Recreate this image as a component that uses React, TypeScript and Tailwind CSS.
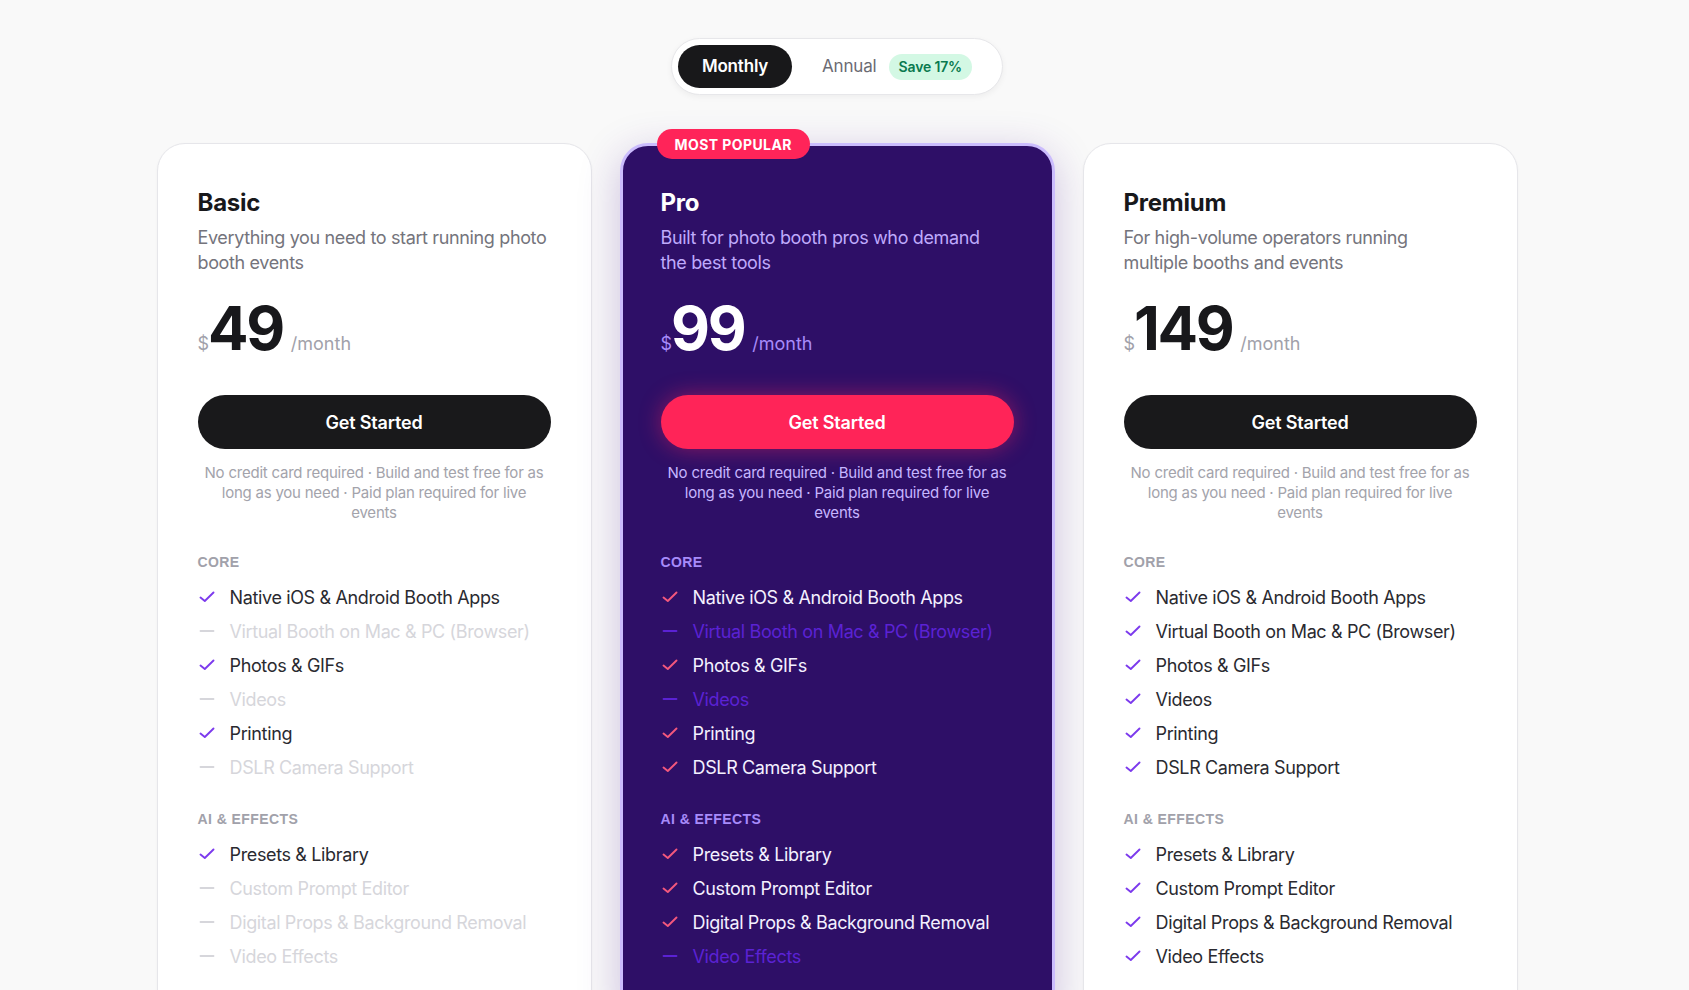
import React from "react";

type Feature = { label: string; on: boolean };
type Plan = {
  name: string;
  desc: string[];
  price: string;
  core: Feature[];
  ai: Feature[];
  featured?: boolean;
};

const coreNames = [
  "Native iOS & Android Booth Apps",
  "Virtual Booth on Mac & PC (Browser)",
  "Photos & GIFs",
  "Videos",
  "Printing",
  "DSLR Camera Support",
];
const aiNames = [
  "Presets & Library",
  "Custom Prompt Editor",
  "Digital Props & Background Removal",
  "Video Effects",
];

const mk = (names: string[], flags: boolean[]) =>
  names.map((label, i) => ({ label, on: flags[i] }));

const plans: Plan[] = [
  {
    name: "Basic",
    desc: ["Everything you need to start running photo", "booth events"],
    price: "49",
    core: mk(coreNames, [true, false, true, false, true, false]),
    ai: mk(aiNames, [true, false, false, false]),
  },
  {
    name: "Pro",
    desc: ["Built for photo booth pros who demand", "the best tools"],
    price: "99",
    core: mk(coreNames, [true, false, true, false, true, true]),
    ai: mk(aiNames, [true, true, true, false]),
    featured: true,
  },
  {
    name: "Premium",
    desc: ["For high-volume operators running", "multiple booths and events"],
    price: "149",
    core: mk(coreNames, [true, true, true, true, true, true]),
    ai: mk(aiNames, [true, true, true, true]),
  },
];

function CheckIcon({ className }: { className: string }) {
  return (
    <svg viewBox="0 0 18 18" className={className} fill="none">
      <path d="M2.5 9.5 L6.8 13 L15.5 4.5" stroke="currentColor" strokeWidth="1.9" strokeLinecap="round" strokeLinejoin="round" />
    </svg>
  );
}

function DashIcon({ className }: { className: string }) {
  return (
    <svg viewBox="0 0 18 18" className={className} fill="none">
      <path d="M2.5 9 L15.5 9" stroke="currentColor" strokeWidth="1.8" strokeLinecap="round" />
    </svg>
  );
}

function FeatureRow({ f, featured }: { f: Feature; featured?: boolean }) {
  const textOn = featured ? "text-[#f4f1ff]" : "text-[#2a2a30]";
  const textOff = featured ? "text-[#5b22d4]" : "text-[#d6d6db]";
  const checkColor = featured ? "text-[#f4587d]" : "text-[#7c3aed]";
  return (
    <li className="flex h-[34px] items-center gap-3.5">
      {f.on ? (
        <CheckIcon className={`h-[18px] w-[18px] shrink-0 ${checkColor}`} />
      ) : (
        <DashIcon className={`h-[18px] w-[18px] shrink-0 ${textOff}`} />
      )}
      <span className={`text-[18px] tracking-[-0.02em] ${f.on ? textOn : textOff}`}>{f.label}</span>
    </li>
  );
}

function Section({ title, items, featured }: { title: string; items: Feature[]; featured?: boolean }) {
  return (
    <div>
      <div
        className={`text-[14px] font-bold uppercase tracking-[0.03em] leading-5 font-['Liberation_Sans',Arial,sans-serif] ${
          featured ? "text-[#a78bfa]" : "text-[#a1a1aa]"
        }`}
      >
        {title}
      </div>
      <ul className="mt-2">
        {items.map((f) => (
          <FeatureRow key={f.label} f={f} featured={featured} />
        ))}
      </ul>
    </div>
  );
}

function PlanCard({ plan }: { plan: Plan }) {
  const ft = plan.featured;
  return (
    <div
      className={`relative rounded-[28px] pb-12 ${
        ft
          ? "border-[3px] border-[#cbbcfd] bg-[#2e0f67] px-[38px] pt-[41px] shadow-[0_10px_40px_rgba(76,29,149,0.25)]"
          : "border border-[#e6e6ea] bg-white px-10 pt-[43px] shadow-[0_1px_3px_rgba(0,0,0,0.04)]"
      }`}
    >
      {ft && (
        <div className="absolute left-[34px] top-[-2px] flex h-[30px] -translate-y-1/2 items-center rounded-full bg-[#ff2459] px-[18px] text-[14px] font-bold uppercase tracking-[0.03em] text-white">
          Most Popular
        </div>
      )}
      <h3 className={`text-2xl font-bold leading-8 tracking-[-0.01em] ${ft ? "text-white" : "text-[#18181b]"}`}>
        {plan.name}
      </h3>
      <p className={`mt-[6px] text-[18px] leading-[25px] tracking-[-0.02em] ${ft ? "text-[#bfaafc]" : "text-[#74747c]"}`}>
        {plan.desc.map((l, i) => (
          <span key={i} className="block whitespace-nowrap">
            {l}
          </span>
        ))}
      </p>
      <div className="mt-[23px] flex items-baseline">
        <span className={`text-[18px] ${ft ? "text-[#a78bfa]" : "text-[#a1a1aa]"}`}>$</span>
        <span className={`ml-[-1px] text-6xl font-bold leading-none tracking-[-0.04em] ${ft ? "text-white" : "text-[#18181b]"}`}>
          {plan.price}
        </span>
        <span className={`ml-2 text-[18px] ${ft ? "text-[#a78bfa]" : "text-[#a1a1aa]"}`}>/month</span>
      </div>
      <button
        className={`mt-[37px] flex h-[54px] w-full items-center justify-center rounded-full text-[18px] font-semibold tracking-[-0.01em] text-white ${
          ft ? "bg-[#ff2458] shadow-[0_0_22px_rgba(255,36,88,0.45)]" : "bg-[#19191b]"
        }`}
      >
        Get Started
      </button>
      <p
        className={`mt-3.5 px-1 text-center text-[15px] leading-5 tracking-[-0.015em] ${
          ft ? "text-[#c6b6ff]" : "text-[#a3a3ab]"
        }`}
      >
        No credit card required · Build and test free for as long as you need · Paid plan required for live events
      </p>
      <div className="mt-[29px]">
        <Section title="Core" items={plan.core} featured={ft} />
      </div>
      <div className="mt-[25px]">
        <Section title="AI & Effects" items={plan.ai} featured={ft} />
      </div>
    </div>
  );
}

export default function App() {
  return (
    <div className="min-h-screen bg-[#f9f9f9] pb-16 pr-[15px] pt-[38px] font-['Inter','Noto_Sans',sans-serif]">
      <div className="flex justify-center">
        <div className="flex items-center rounded-full border border-[#e7e7ea] bg-white p-1.5 shadow-[0_2px_6px_rgba(0,0,0,0.05)]">
          <button className="h-[43px] w-[114px] rounded-full bg-[#18181a] text-[17px] font-semibold tracking-[-0.01em] text-white">
            Monthly
          </button>
          <button className="ml-1.5 flex items-center gap-3 px-6 text-[17px] tracking-[-0.01em] text-[#6b6b73]">
            Annual
            <span className="flex h-[26px] items-center rounded-full bg-[#d3f8e4] px-2.5 text-[14px] font-semibold text-[#0a7a4f]">
              Save 17%
            </span>
          </button>
        </div>
      </div>

      <div className="mx-auto mt-12 grid w-[1361px] grid-cols-3 gap-7">
        {plans.map((p) => (
          <PlanCard key={p.name} plan={p} />
        ))}
      </div>
    </div>
  );
}
